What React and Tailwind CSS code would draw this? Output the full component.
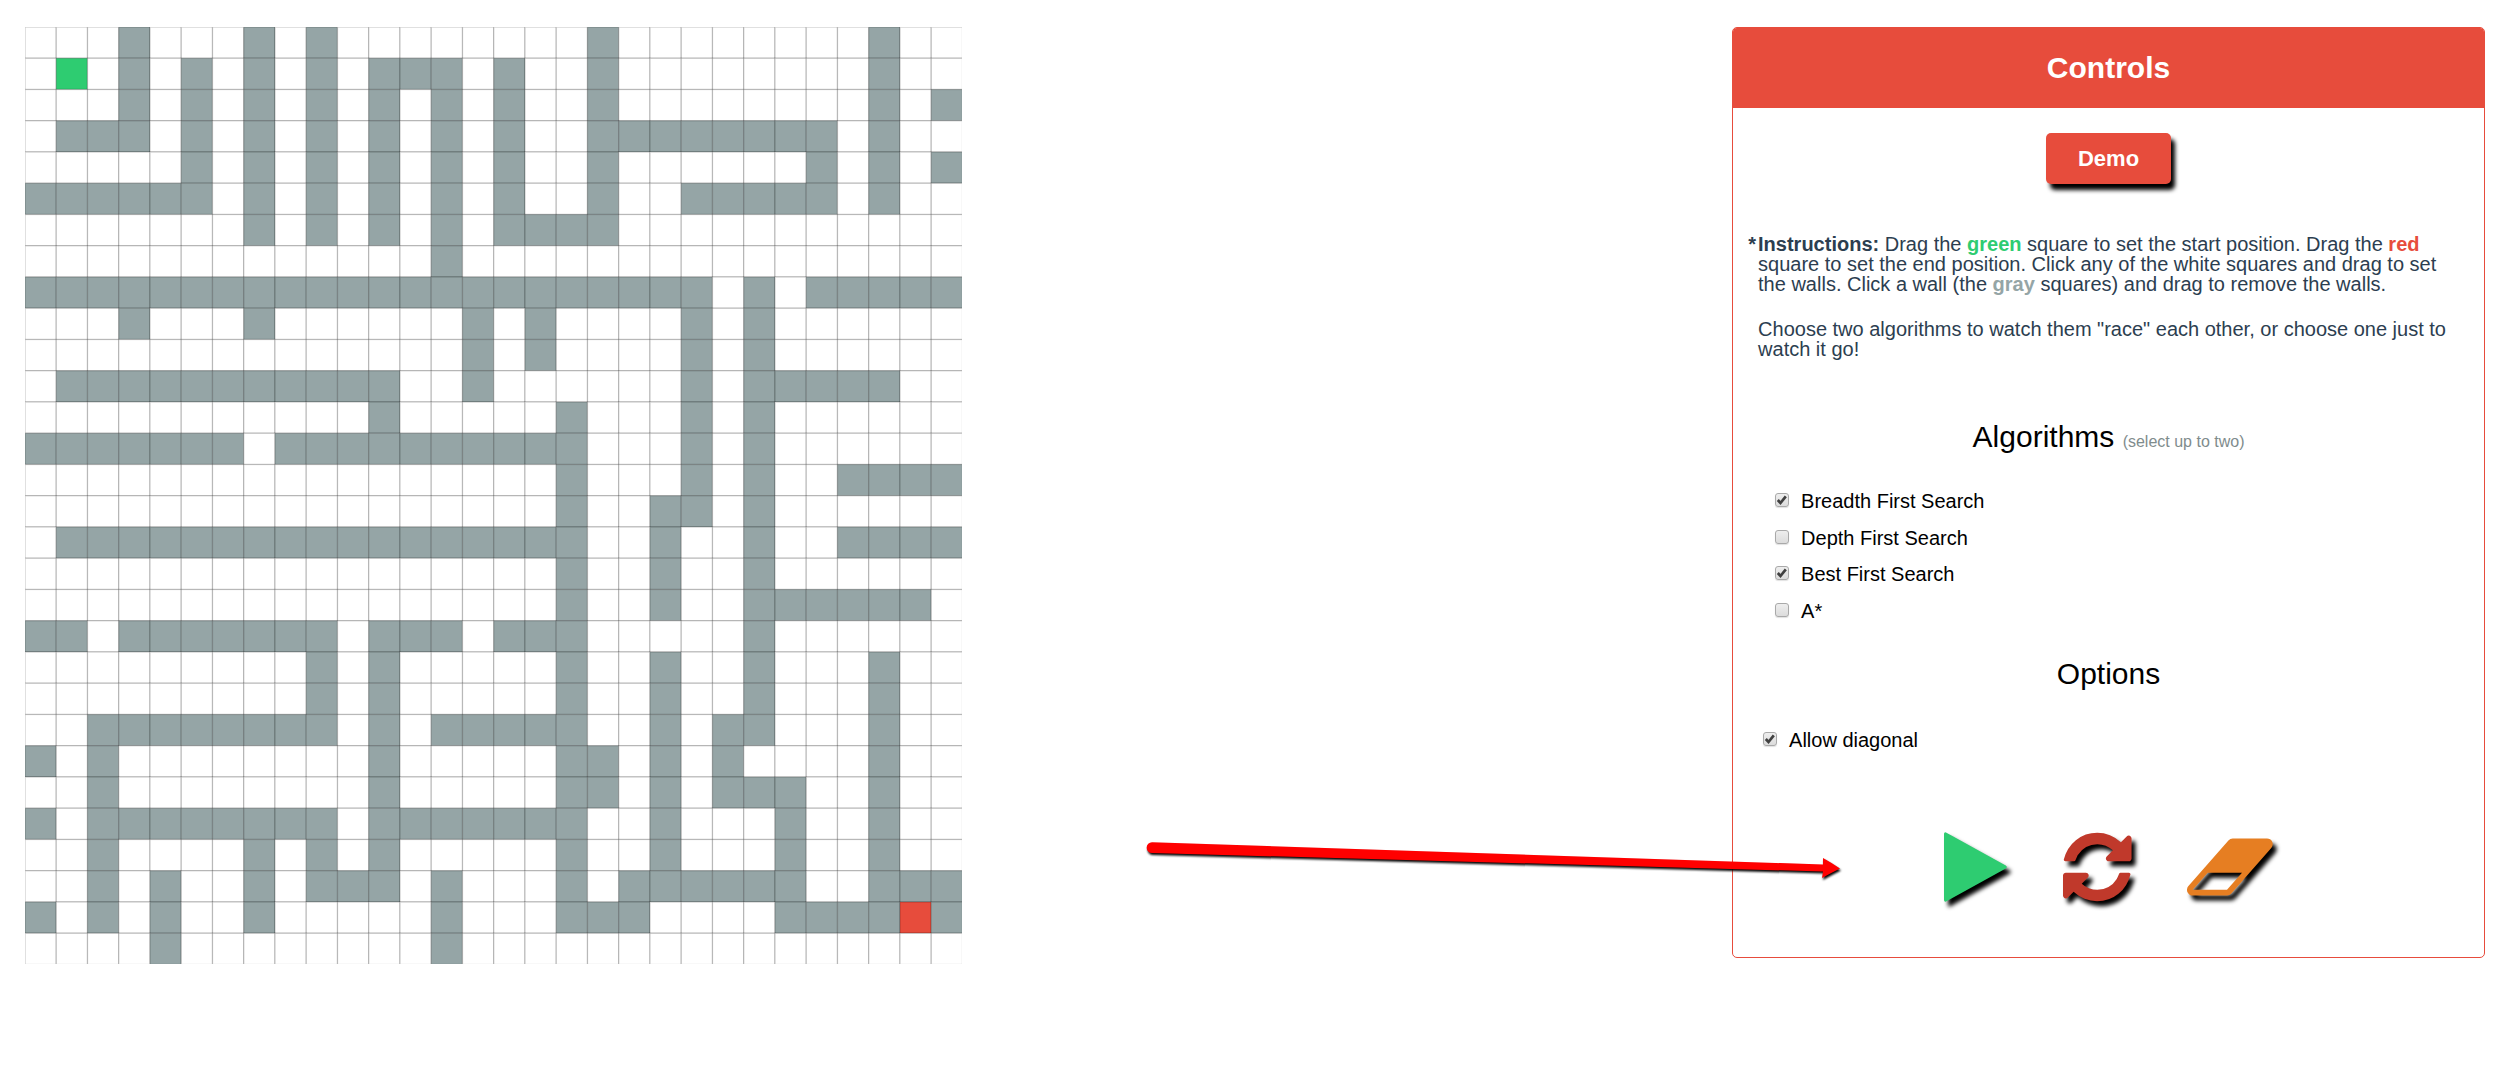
import React from "react";

const SIZE = 30;
const CELL = 25;

const WALLS = [
  "...#...#.#........#........#..",
  "...#.#.#.#.###.#..#........#..",
  "...#.#.#.#.#.#.#..#........#.#",
  ".###.#.#.#.#.#.#..########.#..",
  ".....#.#.#.#.#.#..#......#.#.#",
  "######.#.#.#.#.#..#..#####.#..",
  ".......#.#.#.#.####...........",
  ".............#................",
  "######################.#.#####",
  "...#...#......#.#....#.#......",
  "..............#.#....#.#......",
  ".###########..#......#.#####..",
  "...........#.....#...#.#......",
  "#######.##########...#.#......",
  ".................#...#.#..####",
  ".................#..##.#......",
  ".#################..#..#..####",
  ".................#..#..#......",
  ".................#..#..######.",
  "##.#######.###.###.....#......",
  ".........#.#.....#..#..#...#..",
  ".........#.#.....#..#..#...#..",
  "..########.#.#####..#.##...#..",
  "#.#........#.....##.#.#....#..",
  "..#........#.....##.#.###..#..",
  "#.########.#######..#...#..#..",
  "..#....#.#.#.....#..#...#..#..",
  "..#.#..#.###.#...#.######..###",
  "#.#.#..#.....#...###....####.#",
  "....#........#................",
];

const START = { col: 1, row: 1 };
const END = { col: 28, row: 28 };

function cellColor(col, row) {
  if (col === START.col && row === START.row) return "#2ecc71";
  if (col === END.col && row === END.row) return "#e74c3c";
  return WALLS[row][col] === "#" ? "#95a5a6" : "#ffffff";
}

function Maze() {
  const cells = [];
  for (let row = 0; row < SIZE; row++) {
    for (let col = 0; col < SIZE; col++) {
      cells.push({ row, col });
    }
  }
  return (
    <svg
      role="img"
      aria-label="Maze"
      viewBox="0 0 750 750"
      className="ml-[25px] block h-auto w-[37.44%] shrink-0"
    >
      {cells.map(({ row, col }) => (
        <rect
          key={`${row}-${col}`}
          x={col * CELL}
          y={row * CELL}
          width={CELL}
          height={CELL}
          fill={cellColor(col, row)}
          stroke="#000000"
          strokeOpacity="0.2"
        />
      ))}
    </svg>
  );
}

function Check({ label, name, defaultChecked }) {
  return (
    <label className="flex items-start gap-3 text-xl leading-6 text-black">
      <span className="relative mt-1 block size-[14px] shrink-0">
        <input
          type="checkbox"
          name={name}
          defaultChecked={defaultChecked}
          className="peer block size-[14px] appearance-none rounded-[3px] border border-[#a9a9a9] bg-linear-to-b from-[#eeeeee] to-[#dcdcdc] shadow-[0_1px_1px_rgba(0,0,0,0.12)]"
        />
        <svg
          viewBox="0 0 14 14"
          className="pointer-events-none absolute inset-0 hidden size-[14px] peer-checked:block"
          aria-hidden="true"
        >
          <path d="M2.800 7 L5.500 10 L10.800 3.400" fill="none" stroke="#404040" strokeWidth="2.700" />
        </svg>
      </span>
      <span>{label}</span>
    </label>
  );
}

function IconButton({ label, color, viewBox, path }) {
  return (
    <button type="button" aria-label={label} className="block cursor-pointer">
      <svg
        viewBox={viewBox}
        fill={color}
        className="block h-20 w-auto overflow-visible drop-shadow-[4px_5px_2px_#000000]"
        aria-hidden="true"
      >
        <path d={path} />
      </svg>
    </button>
  );
}

const PLAY =
  "M1576 927l-1328 738q-23 13-39.500 3t-16.500-36v-1472q0-26 16.500-36t39.500 3l1328 738q23 13 23 31t-23 31z";
const REFRESH =
  "M1639 1056q0 5-1 7-64 268-268 434.500t-478 166.500q-146 0-282.500-55t-243.500-157l-129 129q-19 19-45 19t-45-19-19-45v-448q0-26 19-45t45-19h448q26 0 45 19t19 45-19 45l-137 137q71 66 161 102t187 36q134 0 250-65t186-179q11-17 53-117 8-23 30-23h192q13 0 22.500 9.500t9.500 22.500zm25-800v448q0 26-19 45t-45 19h-448q-26 0-45-19t-19-45 19-45l138-138q-148-137-349-137-134 0-250 65t-186 179q-11 17-53 117-8 23-30 23h-199q-13 0-22.500-9.500t-9.500-22.500v-7q65-268 270-434.500t480-166.500q146 0 284 55.500t245 156.500l130-129q19-19 45-19t45 19 19 45z";
const ERASER =
  "M960 1408l336-384h-768l-336 384h768zm1013-1077q15 34 9.500 71.500t-30.500 65.500l-896 1024q-38 44-96 44h-768q-38 0-69.500-20.500t-47.500-54.500q-15-34-9.500-71.500t30.500-65.500l896-1024q38-44 96-44h768q38 0 69.500 20.500t47.500 54.500z";

function Controls() {
  return (
    <section className="mr-[19px] w-[30.07%] shrink-0 overflow-hidden rounded-[5px] border border-[#e74c3c] bg-white">
      <h2 className="bg-[#e74c3c] py-[22px] text-center text-3xl leading-9 font-bold text-white">
        Controls
      </h2>

      <div className="flex justify-center pt-[25px]">
        <button
          type="button"
          className="rounded-[5px] bg-[#e74c3c] px-8 py-3 text-[22px] leading-[27px] font-bold text-white shadow-[4px_6px_4px_#000000]"
        >
          Demo
        </button>
      </div>

      <div className="mt-[50px] px-[25px] text-xl leading-5 text-[#2c3e50]">
        <p className="relative">
          <strong className="absolute right-full mr-[2px]">*</strong>
          <strong>Instructions:</strong> Drag the <strong className="text-[#2ecc71]">green</strong>{" "}
          square to set the start position. Drag the <strong className="text-[#e74c3c]">red</strong>{" "}
          square to set the end position. Click any of the white squares and drag to set the walls.
          Click a wall (the <strong className="text-[#95a5a6]">gray</strong> squares) and drag to
          remove the walls.
        </p>
        <p className="mt-[25px]">
          Choose two algorithms to watch them "race" each other, or choose one just to watch it go!
        </p>
      </div>

      <h3 className="mt-[60px] text-center text-3xl leading-9 text-black">
        Algorithms <small className="text-base leading-4 text-[#7f8c8d]">(select up to two)</small>
      </h3>
      <div className="mt-[34px] ml-[42px] flex h-[134px] flex-col justify-between">
        <Check name="breadth" label="Breadth First Search" defaultChecked />
        <Check name="depth" label="Depth First Search" />
        <Check name="best" label="Best First Search" defaultChecked />
        <Check name="astar" label="A*" />
      </div>

      <h3 className="mt-[33px] text-center text-3xl leading-9 text-black">Options</h3>
      <div className="mt-9 ml-[30px]">
        <Check name="diagonal" label="Allow diagonal" defaultChecked />
      </div>

      <div className="flex justify-center gap-14 pt-[75px] pb-[50px]">
        <IconButton label="Play" color="#2ecc71" viewBox="192 0 1408 1792" path={PLAY} />
        <IconButton label="Reset" color="#c0392b" viewBox="128 0 1536 1792" path={REFRESH} />
        <IconButton label="Clear walls" color="#e67e22" viewBox="64 0 1920 1792" path={ERASER} />
      </div>
    </section>
  );
}

function PointerArrow() {
  return (
    <svg
      viewBox="0 0 710 50"
      className="pointer-events-none absolute top-[836px] left-[45.6%] h-[50px] w-[710px] overflow-visible drop-shadow-[1px_2px_1px_#000000]"
      aria-hidden="true"
    >
      <path
        d="M10 6.300 L681 28.500 L681 22 Q690 27 698 32.500 Q689 37 680 42 L681 35.500 L10 17 A5.300 5.300 0 0 1 10 6.300 Z"
        fill="#ff0000"
      />
    </svg>
  );
}

export default function App() {
  return (
    <main className="relative flex min-h-screen items-start justify-between bg-white pt-[27px] font-['Liberation_Sans',Arial,sans-serif]">
      <Maze />
      <Controls />
      <PointerArrow />
    </main>
  );
}
